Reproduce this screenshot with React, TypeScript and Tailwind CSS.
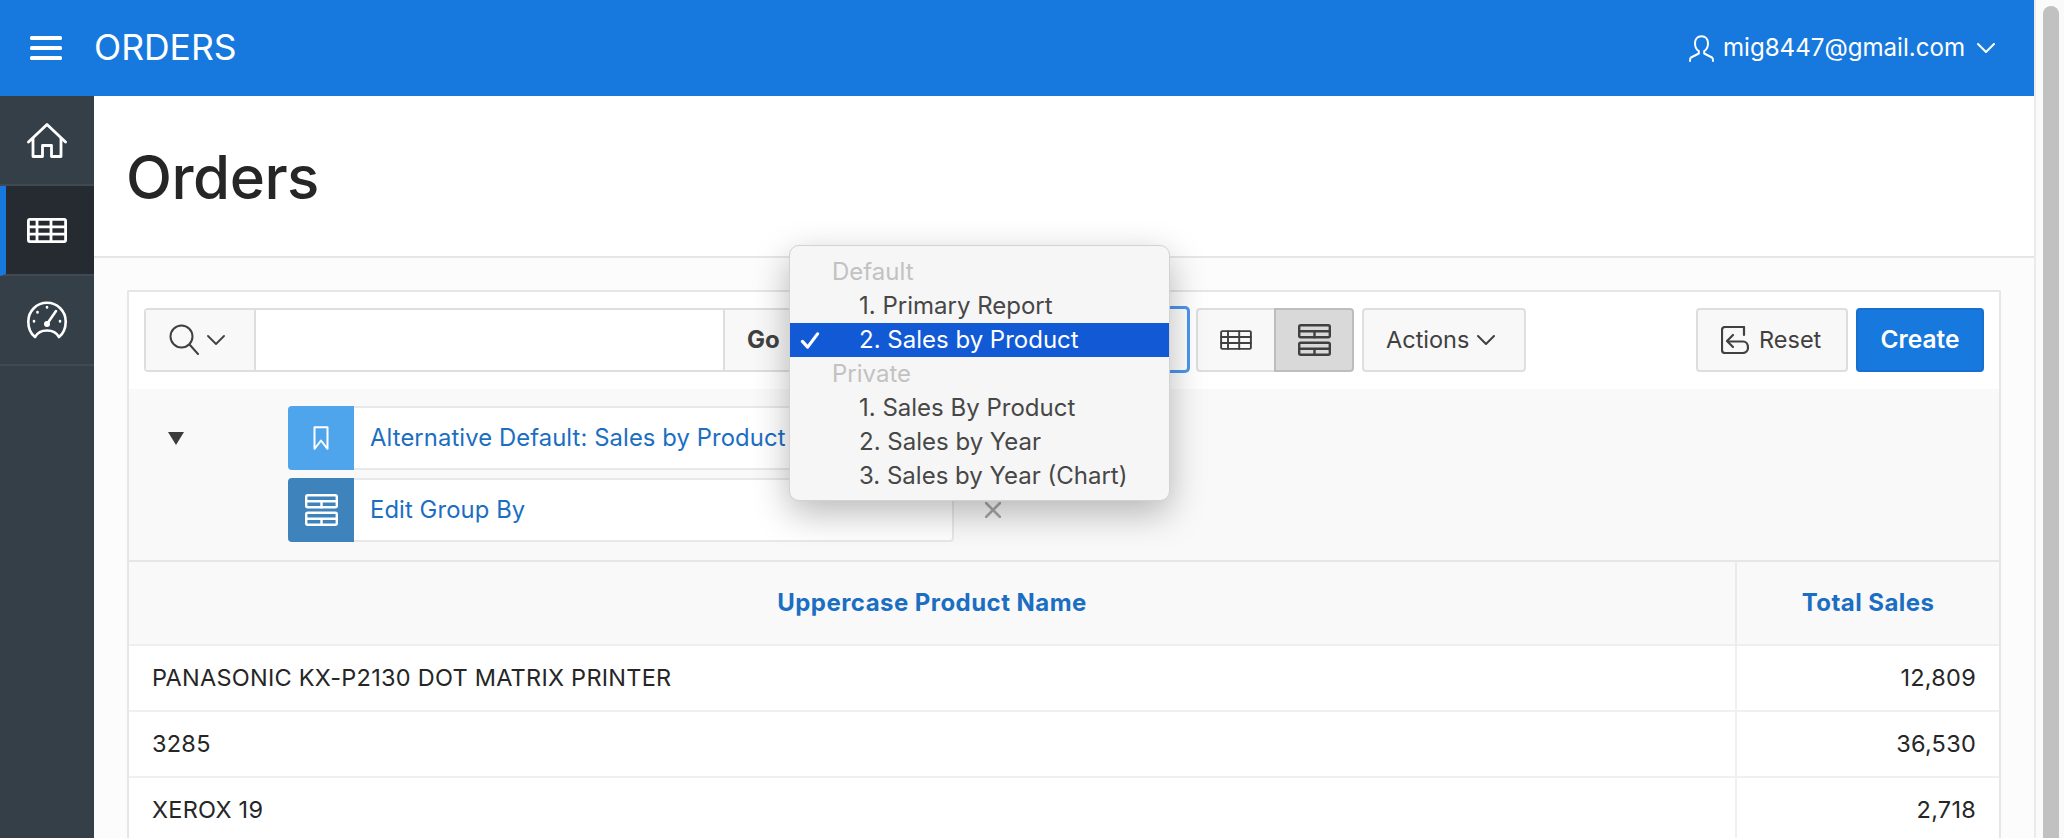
import React from "react";

const stroke = { fill: "none", stroke: "currentColor", strokeLinecap: "round" as const, strokeLinejoin: "round" as const };

function Chevron({ className, sw = 2 }: { className: string; sw?: number }) {
  return (
    <svg viewBox="0 0 18 10" className={className} {...stroke} strokeWidth={sw}>
      <path d="M1 1l8 8 8-8" />
    </svg>
  );
}

function HomeIcon() {
  return (
    <svg viewBox="0 0 40 35" className="w-10 h-[35px]" {...stroke} strokeWidth={2.8}>
      <path d="M1.500 19L20 1.500 38.500 19" />
      <path d="M6 15.500V33.500H15.500V22.500H24.500V33.500H34V15.500" />
    </svg>
  );
}

function TableIcon({ className, sw = 2.8 }: { className: string; sw?: number }) {
  return (
    <svg viewBox="0 0 40 25" className={className} {...stroke} strokeWidth={sw}>
      <rect x="1.400" y="1.400" width="37.200" height="22.200" rx="1.500" />
      <path d="M1.400 8.800H38.600M1.400 16.200H38.600M10 1.400V23.600M24 1.400V23.600" />
    </svg>
  );
}

function GaugeIcon() {
  return (
    <svg viewBox="0 0 40 38" className="w-10 h-[38px]" {...stroke} strokeWidth={2.6}>
      <path d="M8 36C3.500 32.500 1.300 27 1.300 20.500A18.700 18.700 0 0 1 38.700 20.500C38.700 27 36.500 32.500 32 36C29.500 31.500 25 29.500 20 29.500S10.500 31.500 8 36Z" />
      <path d="M20 23L29 10" />
      <circle cx="20" cy="23" r="1.700" fill="currentColor" />
      <path d="M20 6V6.500M7 20V20.500M33 20V20.500M10.500 11V11.500" />
    </svg>
  );
}

function GroupIcon({ className, sw = 2.4 }: { className: string; sw?: number }) {
  return (
    <svg viewBox="0 0 33 32" className={className} {...stroke} strokeWidth={sw}>
      <rect x="1.200" y="1.200" width="30.600" height="12" rx="1.500" />
      <rect x="1.200" y="18.800" width="30.600" height="12" rx="1.500" />
      <path d="M1.200 7.200H31.800M16.500 7.200V13.200M1.200 24.800H31.800M16.500 24.800V30.800" />
    </svg>
  );
}

function Side({ active, children }: { active?: boolean; children: React.ReactNode }) {
  return (
    <div
      className={
        "h-[90px] border-b-2 border-[#3f4a54] flex items-center justify-center " +
        (active ? "bg-[#262b31] border-l-[6px] border-l-[#1779de] pr-[6px]" : "")
      }
    >
      {children}
    </div>
  );
}

function Pill({ color, icon, label }: { color: string; icon: React.ReactNode; label: string }) {
  return (
    <div className="flex h-16 w-[666px] bg-white border-2 border-[#e8e8e8] rounded-[4px]">
      <div className={"w-[66px] -m-[2px] mr-0 rounded-l-[4px] flex items-center justify-center text-white " + color}>
        {icon}
      </div>
      <div className="flex items-center pl-4 text-[23.800px] text-[#1b6ec2] tracking-[0.1px]">{label}</div>
    </div>
  );
}

const rows = [
  ["PANASONIC KX-P2130 DOT MATRIX PRINTER", "12,809"],
  ["3285", "36,530"],
  ["XEROX 19", "2,718"],
];

const menu = [
  { t: "Default", h: true },
  { t: "1. Primary Report" },
  { t: "2. Sales by Product", s: true },
  { t: "Private", h: true },
  { t: "1. Sales By Product" },
  { t: "2. Sales by Year" },
  { t: "3. Sales by Year (Chart)" },
];

export default function App() {
  return (
    <div className="flex h-screen overflow-hidden bg-white font-['Inter','Liberation_Sans',sans-serif] text-[#262626]">
      <div className="w-[2034px] shrink-0 flex flex-col">
        <header className="h-24 shrink-0 bg-[#1779de] text-white flex items-center">
          <svg viewBox="0 0 32 24" className="w-8 h-6 ml-[30px]" fill="currentColor">
            <rect y="0" width="32" height="4" rx="1.500" />
            <rect y="10" width="32" height="4" rx="1.500" />
            <rect y="20" width="32" height="4" rx="1.500" />
          </svg>
          <div className="ml-[32px] text-[35.500px] leading-none">ORDERS</div>
          <div className="ml-auto flex items-center mr-[39px]">
            <svg viewBox="0 0 25 27" className="w-[25px] h-[27px]" {...stroke} strokeWidth={2}>
              <path d="M12.500 1.200c-4 0-6.500 3-6.500 7 0 3.500 1.500 6.500 3.800 8v2.300L2 22.500c-.8.400-1 1.300-1 3.500M12.500 1.200c4 0 6.500 3 6.500 7 0 3.500-1.500 6.500-3.800 8v2.300l7.800 4c.8.400 1 1.300 1 3.500" />
            </svg>
            <div className="ml-[9px] text-[24.100px] leading-none">mig8447@gmail.com</div>
            <Chevron className="w-[18px] h-[10px] ml-3" />
          </div>
        </header>
        <div className="flex flex-1 min-h-0">
          <aside className="w-[94px] shrink-0 bg-[#343f48] text-white">
            <Side><HomeIcon /></Side>
            <Side active><TableIcon className="w-10 h-[25px]" /></Side>
            <Side><GaugeIcon /></Side>
          </aside>
          <main className="flex-1 min-w-0 bg-[#fcfcfc] flex flex-col">
            <div className="h-[162px] shrink-0 bg-white border-b-2 border-[#e6e6e6] flex items-center pl-[32px]">
              <h1 className="text-[60px] leading-none font-medium tracking-[-0.5px] pt-[2px] text-[#262626]">Orders</h1>
            </div>
            <section className="relative mt-[32px] mx-[33px] border-2 border-b-0 border-[#e6e6e6] rounded-t-[2px] bg-white">
              <div className="h-[97px] flex items-center px-[15px] pb-[2px]">
                <div className="flex h-16 w-[659px] border-2 border-[#dedede] rounded-[4px] bg-white">
                  <div className="w-[110px] bg-[#f8f8f8] border-r-2 border-[#dedede] flex items-center pl-[23px] text-[#404040]">
                    <svg viewBox="0 0 30 31" className="w-[30px] h-[31px]" {...stroke} strokeWidth={2}>
                      <circle cx="12.500" cy="12.500" r="11" />
                      <path d="M20.500 20.500L29 30" />
                    </svg>
                    <Chevron className="w-[18px] h-[10px] ml-[8px]" sw={1.800} />
                  </div>
                  <div className="flex-1" />
                  <div className="w-[78px] bg-[#f8f8f8] border-l-2 border-[#dedede] flex items-center pl-[22px] text-[24px] font-bold text-[#404040]">
                    Go
                  </div>
                </div>
                <div className="ml-[5px] w-[382px] h-[67px] border-[3px] border-[#4a96ee] rounded-[5px] bg-white" />
                <div className="ml-[6px] flex h-16 w-[158px]">
                  <div className="w-[78px] bg-[#f8f8f8] border-2 border-r-0 border-[#dedede] rounded-l-[4px] flex items-center justify-center text-[#404040]">
                    <TableIcon className="w-8 h-5" sw={2.400} />
                  </div>
                  <div className="w-[80px] bg-[#d9d9d9] border-2 border-[#bdbdbd] rounded-r-[4px] flex items-center justify-center text-[#404040]">
                    <GroupIcon className="w-[33px] h-8" />
                  </div>
                </div>
                <div className="ml-2 w-[164px] h-16 bg-[#f8f8f8] border-2 border-[#dedede] rounded-[4px] flex items-center pl-[22px] text-[23.500px] text-[#404040]">
                  Actions
                  <Chevron className="w-[18px] h-[10px] ml-2" />
                </div>
                <div className="ml-auto w-[152px] h-16 bg-[#f8f8f8] border-2 border-[#dedede] rounded-[4px] flex items-center pl-[23px] text-[23.500px] text-[#404040]">
                  <svg viewBox="0 0 28 28" className="w-7 h-7 mr-[10px] shrink-0" {...stroke} strokeWidth={2.200}>
                    <path d="M23 9V1H4C2 1 1 2 1 4V24C1 26 2 27 4 27H22C25 27 27 24.500 27 21.500C27 18 25 15.500 22 15.500H7" />
                    <path d="M12 9L6 15L12 21" />
                  </svg>
                  Reset
                </div>
                <div className="ml-2 w-[128px] h-16 bg-[#1779de] border-2 border-[#1670cf] rounded-[4px] flex items-center justify-center text-[24.500px] font-semibold text-white">
                  Create
                </div>
              </div>
              <div className="h-[173px] bg-[#f9f9f9] border-b-2 border-[#e6e6e6] flex pt-[17px] pl-[39px]">
                <svg viewBox="0 0 16 13" className="w-4 h-[13px] mt-[26px]" fill="#3c3c3c">
                  <path d="M0 0H16L8 13Z" />
                </svg>
                <div className="ml-[104px] flex flex-col gap-2">
                  <Pill
                    color="bg-[#4ea5ec]"
                    label="Alternative Default: Sales by Product"
                    icon={
                      <svg viewBox="0 0 16 24" className="w-4 h-6" {...stroke} strokeWidth={2}>
                        <path d="M1.500 1.200H14.500V22.800L8 14.500L1.500 22.800Z" />
                      </svg>
                    }
                  />
                  <div className="relative">
                    <Pill
                      color="bg-[#3f83bd]"
                      label="Edit Group By"
                      icon={<GroupIcon className="w-[33px] h-8" />}
                    />
                    <svg viewBox="0 0 16 16" className="absolute left-[697px] top-[24px] w-4 h-4 text-[#a8a8a8]" {...stroke} strokeWidth={2.600}>
                      <path d="M1 1L15 15M15 1L1 15" />
                    </svg>
                  </div>
                </div>
              </div>
              <table className="w-full border-collapse table-fixed">
                <thead>
                  <tr className="h-[83px] bg-[#f9f9f9] border-b-2 border-[#efefef]">
                    <th className="font-bold text-[24px] tracking-[0.45px] text-[#1b6ec2] text-center border-r-2 border-[#ebebeb]">
                      Uppercase Product Name
                    </th>
                    <th className="w-[263px] font-bold text-[24px] tracking-[0.45px] text-[#1b6ec2] text-center">Total Sales</th>
                  </tr>
                </thead>
                <tbody>
                  {rows.map((r) => (
                    <tr key={r[0]} className="h-[66px] border-b-2 border-[#f0f0f0]">
                      <td className="pl-[23px] text-[23.500px] tracking-[0.25px] border-r-2 border-[#f0f0f0]">{r[0]}</td>
                      <td className="pr-[23px] text-right text-[23.500px] tracking-[0.25px]">{r[1]}</td>
                    </tr>
                  ))}
                </tbody>
              </table>
              <div className="absolute left-[660px] top-[-47px] w-[381px] h-[256px] pt-[9px] bg-[#f6f6f6] border border-[#d2d2d2] rounded-[10px] shadow-[0_12px_36px_rgba(0,0,0,0.28)] overflow-hidden flex flex-col">
                {menu.map((m) => (
                  <div
                    key={m.t}
                    className={
                      "h-[34px] shrink-0 flex items-center text-[24px] relative " +
                      (m.s ? "bg-[#1259d6] text-white " : m.h ? "text-[#c2c2c2] " : "text-[#474747] ") +
                      (m.h ? "pl-[42px]" : "pl-[69px]")
                    }
                  >
                    {m.s && (
                      <svg viewBox="0 0 20 18" className="absolute left-[10px] top-[9px] w-5 h-[17px]" {...stroke} strokeWidth={3.400}>
                        <path d="M2 10L7.500 16L18 2" />
                      </svg>
                    )}
                    {m.t}
                  </div>
                ))}
              </div>
            </section>
          </main>
        </div>
      </div>
      <div className="flex-1 bg-[#fafafa] border-l-2 border-[#ebebeb] flex justify-center pt-[6px] pr-[2px] pl-[4px]">
        <div className="w-4 h-full rounded-t-lg bg-[#c1c1c1]" />
      </div>
    </div>
  );
}
